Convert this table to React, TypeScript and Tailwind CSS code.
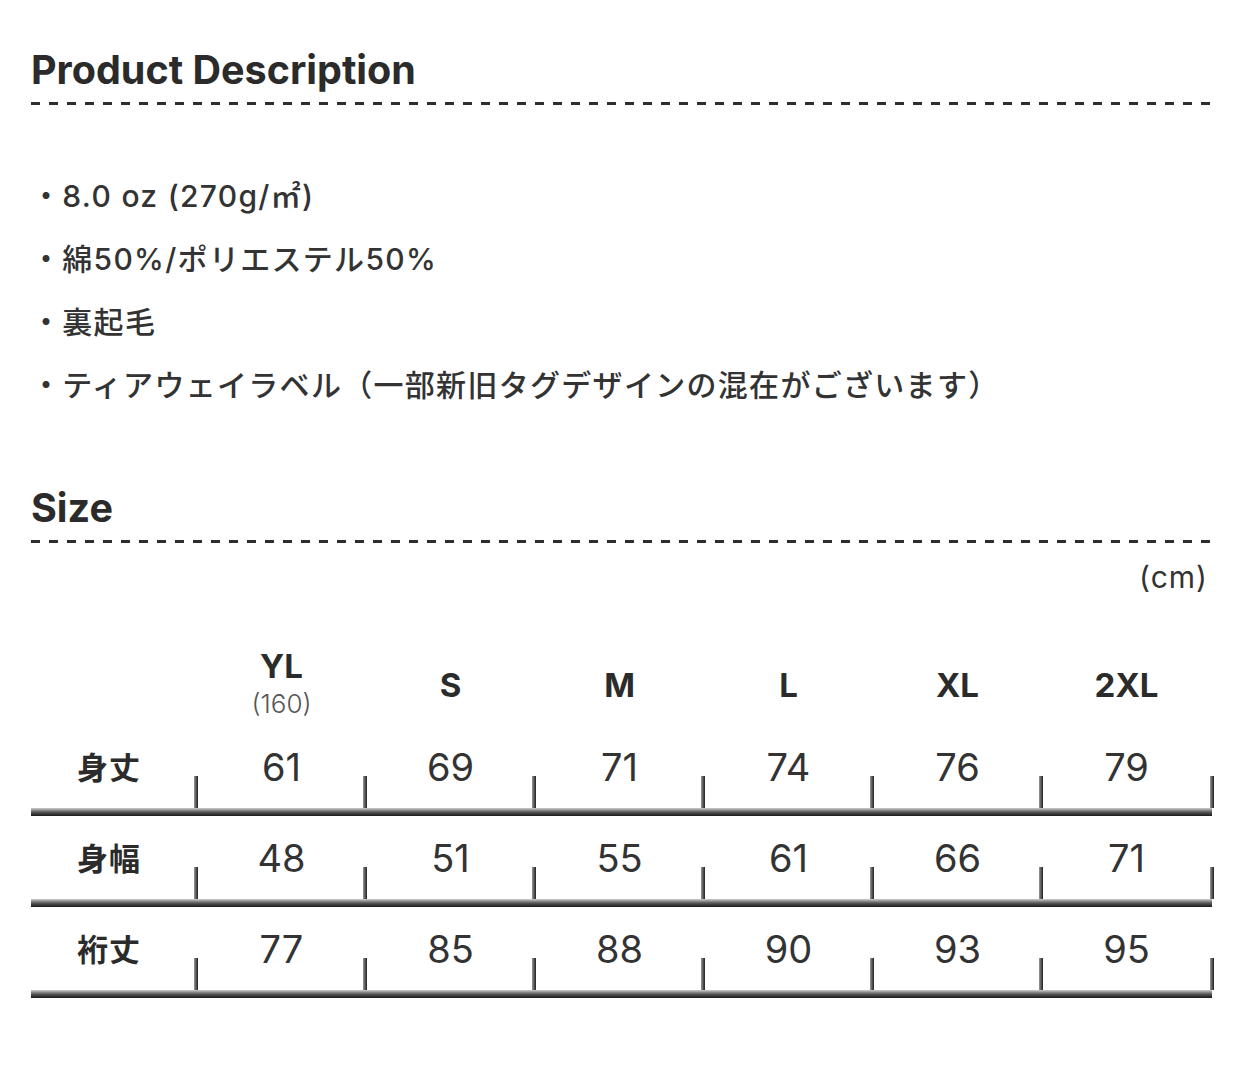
import React from "react";

const sizes = [
  { name: "YL", sub: "(160)" },
  { name: "S" },
  { name: "M" },
  { name: "L" },
  { name: "XL" },
  { name: "2XL" },
];

const rows = [
  { label: "身丈", values: ["61", "69", "71", "74", "76", "79"] },
  { label: "身幅", values: ["48", "51", "55", "61", "66", "71"] },
  { label: "裄丈", values: ["77", "85", "88", "90", "93", "95"] },
];

const items = [
  "・8.0 oz (270g/㎡)",
  "・綿50%/ポリエステル50%",
  "・裏起毛",
  "・ティアウェイラベル（一部新旧タグデザインの混在がございます）",
];

function Dashed() {
  return (
    <div className="h-[3px] w-full bg-[repeating-linear-gradient(to_right,#2e2e2e_0px,#2e2e2e_9px,transparent_9px,transparent_18px)]" />
  );
}

export default function App() {
  return (
    <div
      className="w-[1242px] h-[1089px] bg-white text-[#2b2b2b] pl-[31px] pr-[30px] pt-[50px]"
      style={{ fontFamily: 'Inter, "Noto Sans CJK JP", sans-serif' }}
    >
      <h2 className="text-[39.5px] leading-[40px] font-bold">Product Description</h2>
      <div className="mt-[12px]">
        <Dashed />
      </div>
      <ul className="mt-[60px]">
        {items.map((t) => (
          <li key={t} className="h-[63px] leading-[63px] text-[30px] text-[#333] font-medium tracking-[1.3px]">
            {t}
          </li>
        ))}
      </ul>
      <h2 className="mt-[71px] text-[39.5px] leading-[40px] font-bold">Size</h2>
      <div className="mt-[12px]">
        <Dashed />
      </div>
      <div className="mt-[17px] h-[34px] leading-[34px] text-right text-[30px] tracking-[1px] text-[#333] pr-[4px]">(cm)</div>

      <div className="mt-[51px] flex h-[80px]">
        <div className="w-[166px] shrink-0" />
        {sizes.map((s) => (
          <div key={s.name} className="w-[169px] shrink-0 flex flex-col items-center justify-center">
            <div className="text-[33px] leading-[34px] font-bold text-[#2b2b2b]">{s.name}</div>
            {s.sub && (
              <div className="mt-[4px] text-[26px] leading-[34px] font-light text-[#555]">{s.sub}</div>
            )}
          </div>
        ))}
      </div>

      {rows.map((r) => (
        <div key={r.label}>
          <div className="flex h-[83px]">
            <div className="w-[166px] shrink-0 flex items-center justify-center pr-[10px]">
              <span
                className="text-[31px] font-semibold text-[#2b2b2b] tracking-[1px]"
                style={{ fontFamily: '"Noto Sans CJK JP", sans-serif' }}
              >
                {r.label}
              </span>
            </div>
            {r.values.map((v, i) => (
              <div key={i} className="w-[169px] shrink-0 relative flex items-center justify-center">
                <span className="text-[38px] leading-none font-normal text-[#333]">{v}</span>
                <div className="absolute left-[-3px] bottom-0 w-[4px] h-[32px] bg-gradient-to-r from-[#9a9a9a] to-[#222]" />
                {i === r.values.length - 1 && (
                  <div className="absolute right-[-3px] bottom-0 w-[4px] h-[32px] bg-gradient-to-r from-[#9a9a9a] to-[#222]" />
                )}
              </div>
            ))}
          </div>
          <div className="h-[8px] w-[1181px] bg-gradient-to-b from-[#d0d0d0] via-[#5a5a5a] to-[#1a1a1a]" />
        </div>
      ))}
    </div>
  );
}
